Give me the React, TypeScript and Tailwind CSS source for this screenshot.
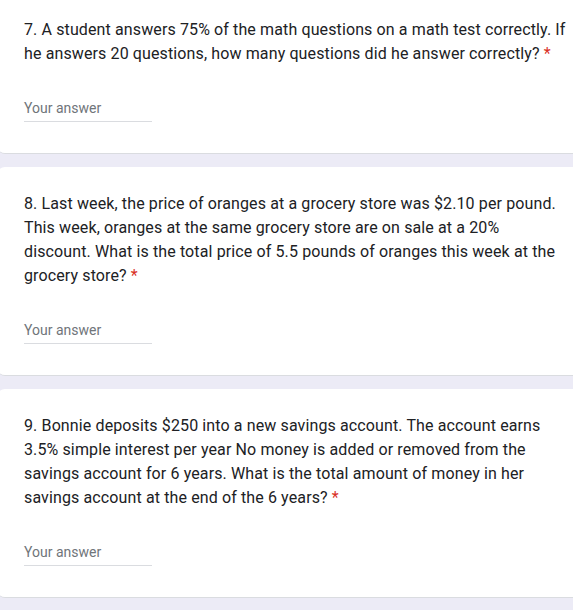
const questions = [
  {
    lines: [
      "7. A student answers 75% of the math questions on a math test correctly. If",
      "he answers 20 questions, how many questions did he answer correctly?",
    ],
  },
  {
    lines: [
      "8. Last week, the price of oranges at a grocery store was $2.10 per pound.",
      "This week, oranges at the same grocery store are on sale at a 20%",
      "discount. What is the total price of 5.5 pounds of oranges this week at the",
      "grocery store?",
    ],
  },
  {
    lines: [
      "9. Bonnie deposits $250 into a new savings account. The account earns",
      "3.5% simple interest per year No money is added or removed from the",
      "savings account for 6 years. What is the total amount of money in her",
      "savings account at the end of the 6 years?",
    ],
  },
];

function QuestionCard({ lines }: { lines: string[] }) {
  return (
    <div className="ml-[-3px] w-[640px] rounded-[8px] border-b border-[#dadce0] bg-white pb-[31px] pl-[27px] pt-[25px]">
      <div className="text-[16px] leading-[24px] tracking-[0.12px] text-[#202124] [font-family:Roboto,sans-serif]">
        {lines.map((line, i) => (
          <div key={i} className="whitespace-nowrap">
            {line}
            {i === lines.length - 1 && (
              <span className="ml-[4px] text-[#d93025]">*</span>
            )}
          </div>
        ))}
      </div>
      <div className="mt-[30px] w-[128px] border-b border-[#dadce0] pb-[1px]">
        <span className="block text-[14px] leading-[24px] text-[#70757a] [font-family:Roboto,sans-serif]">
          Your answer
        </span>
      </div>
    </div>
  );
}

export default function App() {
  return (
    <div className="h-[610px] w-[573px] overflow-hidden bg-[#ecebf6]">
      <div className="mt-[-7px] flex flex-col gap-[13px]">
        {questions.map((q, i) => (
          <QuestionCard key={i} lines={q.lines} />
        ))}
      </div>
    </div>
  );
}
